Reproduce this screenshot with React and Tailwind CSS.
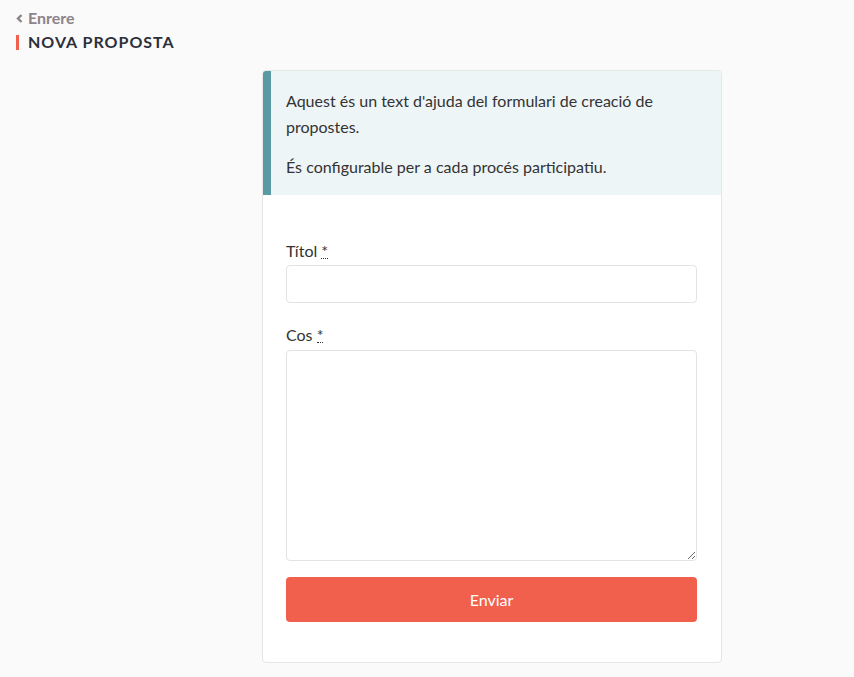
import React from 'react';

export default function App() {
  return (
    <div
      className="min-h-[677px] bg-[#fafafa] text-[#3d3d3d]"
      style={{ fontFamily: '"Source Sans Pro", Lato, "Noto Sans", sans-serif' }}
    >
      {/* Header */}
      <div className="pl-[16px] pt-[9px]">
        <a className="flex items-center gap-[5px] text-[16px] font-bold text-[#8c8489] leading-[18px]">
          <svg width="7" height="9" viewBox="0 0 7 9" className="mt-[1px]">
            <path d="M5.5 1 L2 4.5 L5.5 8" stroke="#8c8489" strokeWidth="2.4" fill="none" />
          </svg>
          <span>Enrere</span>
        </a>
        <div className="flex items-center mt-[5px]">
          <span className="w-[3px] h-[15px] bg-[#f0604d] mr-[9px]" />
          <h1 className="text-[16px] font-bold tracking-[1px] text-[#2c2f3a] leading-[20px]">NOVA PROPOSTA</h1>
        </div>
      </div>

      {/* Card */}
      <div className="pl-[262px] pt-[18px] pb-[14px]">
        <div className="w-[460px] bg-white border border-[#e6e6e6] rounded-[4px] overflow-hidden">
          <div className="bg-[#eef5f7] border-l-[8px] border-[#5a9aa5] pl-[15px] pr-[16px] pt-[17px] pb-[15px] text-[16px] leading-[26px] text-[#333]">
            <p>Aquest és un text d'ajuda del formulari de creació de propostes.</p>
            <p className="mt-[14px]">És configurable per a cada procés participatiu.</p>
          </div>
          <form className="pl-[23px] pr-[24px] pt-[46px] pb-[40px]">
            <label className="block text-[16px] leading-[20px] text-[#333]">
              Títol{' '}
              <abbr className="no-underline border-b border-dotted border-[#333] leading-[14px] inline-block">*</abbr>
            </label>
            <input className="mt-[4px] block w-full h-[38px] border border-[#e3e3e3] rounded-[4px] bg-white" />
            <label className="block mt-[22px] text-[16px] leading-[20px] text-[#333]">
              Cos{' '}
              <abbr className="no-underline border-b border-dotted border-[#333] leading-[14px] inline-block">*</abbr>
            </label>
            <textarea className="mt-[5px] block w-full h-[211px] border border-[#e3e3e3] rounded-[4px] bg-white" />
            <button
              type="button"
              className="mt-[16px] w-full h-[45px] rounded-[4px] bg-[#f0604d] text-white text-[16px]"
            >
              Enviar
            </button>
          </form>
        </div>
      </div>
    </div>
  );
}
